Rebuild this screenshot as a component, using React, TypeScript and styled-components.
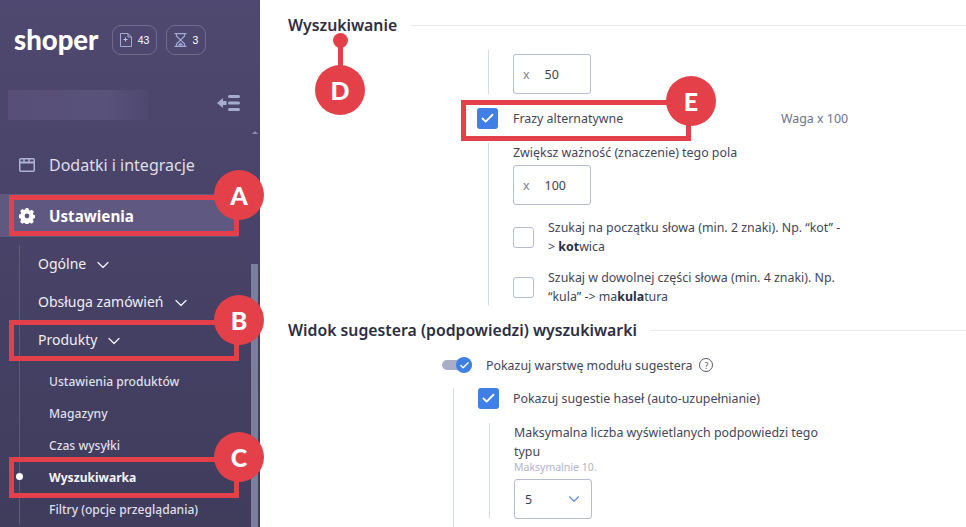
import React from "react";
import styled, { createGlobalStyle } from "styled-components";
import { Check, ChevronDown } from "lucide-react";

const Global = createGlobalStyle`
  html, body { margin: 0; padding: 0; height: 100%; background: #fff; overflow: hidden; }
  * { box-sizing: border-box; }
  body { font-family: "Noto Sans", "Liberation Sans", sans-serif; }
`;

const Page = styled.div`
  position: relative;
  width: 966px;
  height: 527px;
  display: flex;
  overflow: hidden;
`;

const Sidebar = styled.aside`
  position: relative;
  flex: 0 0 260px;
  height: 527px;
  background: linear-gradient(180deg, #4f4870 0%, #3f3c5c 100%);
  color: #f1f0f6;
  overflow: hidden;
`;

const TopBar = styled.div`
  display: flex;
  align-items: center;
  height: 30px;
  margin-top: 25px;
  padding-left: 14px;
`;

const Logo = styled.div`
  font-family: Lato, sans-serif;
  font-weight: 900;
  font-size: 27.5px;
  color: #fff;
  width: 98px;
  line-height: 30px;
`;

const Badge = styled.div<{ $w: number }>`
  width: ${(p) => p.$w}px;
  height: 30px;
  margin-right: 9px;
  border: 1px solid rgba(255, 255, 255, 0.2);
  border-radius: 9px;
  display: flex;
  align-items: center;
  justify-content: center;
  gap: 6px;
  font-family: "Liberation Sans", sans-serif;
  font-size: 10.5px;
  color: #fff;
  svg { display: block; }
`;

const StoreRow = styled.div`
  display: flex;
  align-items: center;
  justify-content: space-between;
  height: 30px;
  margin-top: 35px;
  padding: 0 20px 0 8px;
  svg { margin-top: -4px; }
`;

const BlurredName = styled.div`
  width: 140px;
  height: 30px;
  background: linear-gradient(90deg, #574f78 0%, #585179 70%, #4f4870 100%);
`;

const MainNav = styled.a`
  display: flex;
  align-items: center;
  gap: 14px;
  height: 43px;
  margin-top: 23px;
  padding-left: 19px;
  font-size: 16px;
  color: #dfdeea;
`;

const ActiveNav = styled(MainNav)`
  margin: 8px 0 0;
  width: 238px;
  background: #5f5880;
  color: #fff;
  font-size: 15.2px;
  font-weight: 700;
`;

const SubTree = styled.div`
  margin: 8px 0 0 19px;
  border-left: 1px solid #5d5a7b;
  position: relative;
`;

const SubGroup = styled.a`
  display: flex;
  align-items: center;
  gap: 7px;
  height: 38px;
  padding: 0 0 2px 18px;
  font-size: 14px;
  color: #eeeef4;
  svg { margin-top: 3px; }
`;

const SubItem = styled.a<{ $active?: boolean }>`
  position: relative;
  display: flex;
  align-items: center;
  height: 32px;
  padding-left: 29px;
  font-size: 12.1px;
  font-weight: ${(p) => (p.$active ? 700 : 500)};
  color: ${(p) => (p.$active ? "#f3f3f8" : "#dfdfe9")};
  white-space: nowrap;
`;

const Dot = styled.span`
  position: absolute;
  left: -4px;
  top: 12px;
  width: 7px;
  height: 7px;
  border-radius: 50%;
  background: #fff;
`;

const SubList = styled.div`
  margin-top: 6px;
`;

const ScrollArrow = styled.span`
  position: absolute;
  left: 252px;
  top: 131px;
  width: 0;
  height: 0;
  border-left: 3px solid transparent;
  border-right: 3px solid transparent;
  border-bottom: 3px solid #8f8cab;
`;

const ScrollThumb = styled.span`
  position: absolute;
  left: 251px;
  top: 264px;
  width: 7px;
  height: 263px;
  background: #7b7f9d;
`;

const Main = styled.main`
  flex: 1;
  min-width: 0;
  padding: 15px 0 0 28px;
  color: #36394d;
`;

const SectionHead = styled.div`
  display: flex;
  align-items: center;
  gap: 14px;
  height: 20px;
`;

const SectionTitle = styled.h2`
  margin: 0;
  font-size: 15.8px;
  font-weight: 600;
  color: #2b2e44;
  white-space: nowrap;
`;

const Rule = styled.div`
  flex: 1;
  height: 1px;
  background: #e8e9ee;
`;

const Indented = styled.div<{ $mt: number }>`
  margin: ${(p) => p.$mt}px 0 0 200px;
  width: 380px;
  padding-left: 24px;
  border-left: 1px solid #d6dceb;
`;

const TopSegment = styled(Indented)`
  padding-top: 4px;
`;

const NumberBox = styled.div`
  width: 78px;
  height: 40px;
  border: 1px solid #b4bbd3;
  border-radius: 3px;
  display: flex;
  align-items: center;
  padding-left: 9px;
  gap: 15px;
  font-size: 12.4px;
  color: #3b3e52;
`;

const LowerBox = styled(NumberBox)`
  margin-top: 3px;
`;

const Mult = styled.span`
  color: #7c7f93;
`;

const AltRow = styled.div`
  display: flex;
  align-items: center;
  margin: 14px 0 0 189px;
  gap: 15px;
  font-size: 12.4px;
  color: #43465a;
`;

const AltLabel = styled.span`
  width: 253px;
`;

const Box = styled.span<{ $on?: boolean }>`
  flex: 0 0 21px;
  width: 21px;
  height: 21px;
  border-radius: 3px;
  display: flex;
  align-items: center;
  justify-content: center;
  background: ${(p) => (p.$on ? "#3f7fe6" : "#fff")};
  border: ${(p) => (p.$on ? "none" : "1px solid #b4bbd3")};
  color: #fff;
`;

const Weight = styled.span`
  white-space: nowrap;
  color: #6d7190;
`;

const FieldLabel = styled.div`
  font-size: 12.4px;
  line-height: 19px;
  color: #43465a;
`;

const OptRow = styled.div<{ $mt: number }>`
  display: flex;
  align-items: center;
  gap: 14px;
  margin-top: ${(p) => p.$mt}px;
  font-size: 12.4px;
  line-height: 19px;
  color: #43465a;
  b { color: #2b2e44; font-weight: 700; }
`;

const OptText = styled.span`
  width: 298px;
`;

const SecondHead = styled(SectionHead)`
  margin-top: 14px;
`;

const ToggleRow = styled.div`
  display: flex;
  align-items: center;
  gap: 14px;
  margin: 15px 0 0 154px;
  height: 20px;
  font-size: 12.4px;
  color: #43465a;
`;

const Toggle = styled.span`
  position: relative;
  width: 30px;
  height: 10px;
  border-radius: 5px;
  background: #a9aec6;
  display: block;
`;

const Knob = styled.span`
  position: absolute;
  right: 0;
  top: -3px;
  width: 16px;
  height: 16px;
  border-radius: 50%;
  background: #3f7fe6;
  color: #fff;
  display: flex;
  align-items: center;
  justify-content: center;
`;

const Help = styled.span`
  width: 14px;
  height: 14px;
  border-radius: 50%;
  border: 1px solid #55586c;
  display: flex;
  align-items: center;
  justify-content: center;
  font-size: 9px;
  line-height: 1;
  color: #55586c;
  margin-left: -7px;
`;

const Nested = styled.div`
  margin: 13px 0 0 165px;
  padding-left: 24px;
  border-left: 1px solid #d6dceb;
  height: 139px;
`;

const NestedCheck = styled.div`
  display: flex;
  align-items: center;
  gap: 14px;
  font-size: 12.4px;
  color: #43465a;
`;

const NestedInner = styled.div`
  margin: 14px 0 0 11px;
  padding-left: 24px;
  border-left: 1px solid #d6dceb;
  width: 345px;
  height: 95px;
`;

const Hint = styled.div`
  font-size: 10.5px;
  line-height: 12px;
  color: #b0b4c8;
`;

const SelectBox = styled(NumberBox)`
  margin-top: 6px;
  justify-content: space-between;
  padding: 0 8px 0 10px;
  svg { color: #5b8de0; }
`;

const Frame = styled.div<{ $l: number; $t: number; $w: number }>`
  position: absolute;
  left: ${(p) => p.$l}px;
  top: ${(p) => p.$t}px;
  width: ${(p) => p.$w}px;
  height: 41px;
  border: 5px solid #e4404a;
  pointer-events: none;
`;

const Marker = styled.div<{ $l: number; $t: number }>`
  position: absolute;
  left: ${(p) => p.$l}px;
  top: ${(p) => p.$t}px;
  width: 50px;
  height: 50px;
  border-radius: 50%;
  background: #e4404a;
  color: #fff;
  font-family: Lato, sans-serif;
  font-weight: 900;
  font-size: 25px;
  display: flex;
  align-items: center;
  justify-content: center;
`;

const Stem = styled.div`
  position: absolute;
  left: 338px;
  top: 40px;
  width: 5px;
  height: 30px;
  background: #e4404a;
`;

const StemDot = styled.div`
  position: absolute;
  left: 333px;
  top: 33px;
  width: 15px;
  height: 15px;
  border-radius: 50%;
  background: #e4404a;
`;

const FileIcon = () => (
  <svg width="12" height="14" viewBox="0 0 12 14" fill="none" stroke="#a3a9d6" strokeWidth="1">
    <path d="M.5 .5h7.5L11.5 4v9.5H.5z" />
    <path d="M8 .5V4h3.5" />
    <path d="M5.5 4.5v4M3.5 6.5h4" stroke="#c3c6e2" />
  </svg>
);

const HourglassIcon = () => (
  <svg width="13" height="14" viewBox="0 0 13 14" fill="none" stroke="#a3a9d6" strokeWidth="1.2">
    <path d="M.5 .7h12M.5 13.3h12" />
    <path d="M2.5 1v2.2l4 3.8 4-3.8V1M2.5 13v-2.2l4-3.8 4 3.8V13" />
    <path d="M3.5 12.6 6.5 9.4l3 3.2z" fill="#a3a9d6" stroke="none" />
  </svg>
);

const CollapseIcon = () => (
  <svg width="23" height="16" viewBox="0 0 23 16" fill="#a6accf">
    <rect x="11" y="0" width="12" height="3" rx="1.5" />
    <rect x="11" y="6.5" width="12" height="3" rx="1.5" />
    <rect x="11" y="13" width="12" height="3" rx="1.5" />
    <path d="M0 8l6-5v3h3.5v4H6v3z" />
  </svg>
);

const WindowIcon = () => (
  <svg width="16" height="14" viewBox="0 0 16 14" fill="none" stroke="#aeb3d2" strokeWidth="1.5">
    <rect x=".75" y=".75" width="14.5" height="12.5" rx="1" />
    <path d="M.75 4.5h14.5" strokeWidth="2" />
    <path d="M5 1v3M10 1v3" />
  </svg>
);

const GearIcon = () => (
  <svg width="16" height="16" viewBox="0 0 16 16" fill="#fff">
    <path
      fillRule="evenodd"
      d="M6.6 0h2.8l.4 2.1 1.2.6 1.9-1 2 2-1 1.9.5 1.2 2 .5v2.8l-2 .5-.6 1.2 1 1.9-2 2-1.9-1-1.2.5-.4 2.2H6.6l-.4-2.1-1.2-.6-1.9 1-2-2 1-1.9-.5-1.2-2-.5V6.7l2-.5.6-1.2-1-1.9 2-2 1.9 1 1.2-.5zM8 5.6a2.4 2.4 0 1 0 0 4.8 2.4 2.4 0 0 0 0-4.8z"
    />
  </svg>
);

export default function App() {
  return (
    <Page>
      <Global />
      <Sidebar>
        <TopBar>
          <Logo>shoper</Logo>
          <Badge $w={45}>
            <FileIcon />
            <span>43</span>
          </Badge>
          <Badge $w={40}>
            <HourglassIcon />
            <span>3</span>
          </Badge>
        </TopBar>
        <StoreRow>
          <BlurredName />
          <CollapseIcon />
        </StoreRow>
        <ScrollArrow />
        <MainNav>
          <WindowIcon />
          Dodatki i integracje
        </MainNav>
        <ActiveNav>
          <GearIcon />
          Ustawienia
        </ActiveNav>
        <SubTree>
          <SubGroup>
            Ogólne <ChevronDown size={20} strokeWidth={1.6} />
          </SubGroup>
          <SubGroup>
            Obsługa zamówień <ChevronDown size={20} strokeWidth={1.6} />
          </SubGroup>
          <SubGroup>
            Produkty <ChevronDown size={20} strokeWidth={1.6} />
          </SubGroup>
          <SubList>
            <SubItem>Ustawienia produktów</SubItem>
            <SubItem>Magazyny</SubItem>
            <SubItem>Czas wysyłki</SubItem>
            <SubItem $active>
              <Dot />
              Wyszukiwarka
            </SubItem>
            <SubItem>Filtry (opcje przeglądania)</SubItem>
          </SubList>
        </SubTree>
        <ScrollThumb />
      </Sidebar>
      <Main>
        <SectionHead>
          <SectionTitle>Wyszukiwanie</SectionTitle>
          <Rule />
        </SectionHead>
        <TopSegment $mt={15}>
          <NumberBox>
            <Mult>x</Mult>
            <span>50</span>
          </NumberBox>
        </TopSegment>
        <AltRow>
          <Box $on>
            <Check size={15} strokeWidth={3} />
          </Box>
          <AltLabel>Frazy alternatywne</AltLabel>
          <Weight>Waga x 100</Weight>
        </AltRow>
        <Indented $mt={14}>
          <FieldLabel>Zwiększ ważność (znaczenie) tego pola</FieldLabel>
          <LowerBox>
            <Mult>x</Mult>
            <span>100</span>
          </LowerBox>
          <OptRow $mt={13}>
            <Box />
            <OptText>
              Szukaj na początku słowa (min. 2 znaki). Np. “kot” -&gt; <b>kot</b>wica
            </OptText>
          </OptRow>
          <OptRow $mt={12}>
            <Box />
            <OptText>
              Szukaj w dowolnej części słowa (min. 4 znaki). Np. “kula” -&gt; ma<b>kula</b>tura
            </OptText>
          </OptRow>
        </Indented>
        <SecondHead>
          <SectionTitle>Widok sugestera (podpowiedzi) wyszukiwarki</SectionTitle>
          <Rule />
        </SecondHead>
        <ToggleRow>
          <Toggle>
            <Knob>
              <Check size={11} strokeWidth={3} />
            </Knob>
          </Toggle>
          <span>Pokazuj warstwę modułu sugestera</span>
          <Help>?</Help>
        </ToggleRow>
        <Nested>
          <NestedCheck>
            <Box $on>
              <Check size={15} strokeWidth={3} />
            </Box>
            <span>Pokazuj sugestie haseł (auto-uzupełnianie)</span>
          </NestedCheck>
          <NestedInner>
            <FieldLabel>Maksymalna liczba wyświetlanych podpowiedzi tego typu</FieldLabel>
            <Hint>Maksymalnie 10.</Hint>
            <SelectBox>
              <span>5</span>
              <ChevronDown size={18} strokeWidth={1.5} />
            </SelectBox>
          </NestedInner>
        </Nested>
      </Main>
      <Frame $l={9} $t={195} $w={230} />
      <Frame $l={9} $t={320} $w={230} />
      <Frame $l={9} $t={457} $w={230} />
      <Frame $l={461} $t={100} $w={230} />
      <Marker $l={214} $t={170}>A</Marker>
      <Marker $l={214} $t={295}>B</Marker>
      <Marker $l={214} $t={432}>C</Marker>
      <StemDot />
      <Stem />
      <Marker $l={315} $t={65}>D</Marker>
      <Marker $l={666} $t={76}>E</Marker>
    </Page>
  );
}
